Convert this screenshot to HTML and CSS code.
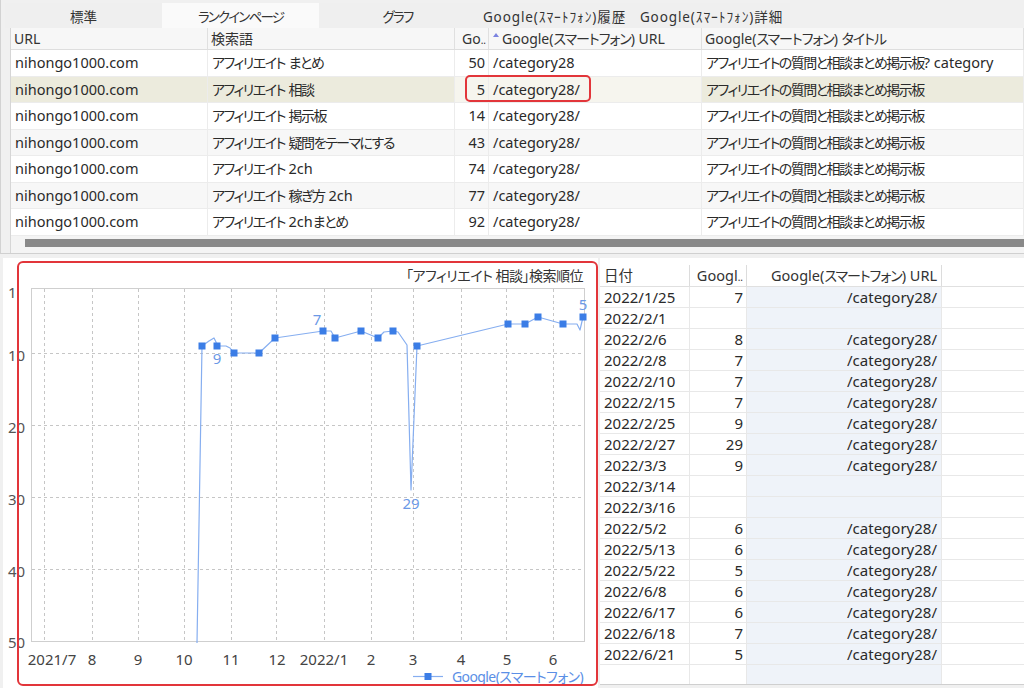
FILE: index.html
```html
<!DOCTYPE html>
<html lang="ja">
<head>
<meta charset="utf-8">
<title>ランクインページ</title>
<link rel="stylesheet" href="styles.css">
</head>
<body>
<div class="app">
  <section class="top">
    <nav class="tabs">
      <div class="tab">標準</div>
      <div class="tab active"><span class="ja">ランクインページ</span></div>
      <div class="tab"><span class="ja">グラフ</span></div>
      <div class="tab hw">Google(ｽﾏｰﾄﾌｫﾝ)履歴</div>
      <div class="tab hw">Google(ｽﾏｰﾄﾌｫﾝ)詳細</div>
    </nav>
    <div class="grid-wrap">
      <div class="row head">
        <div class="cell">URL</div>
        <div class="cell">検索語</div>
        <div class="cell num">Go<span class="dots">..</span></div>
        <div class="cell"><span class="sort"></span>Google(<span class="ja">スマートフォン</span>) URL</div>
        <div class="cell">Google(<span class="ja">スマートフォン</span>) <span class="ja">タイトル</span></div>
      </div>
      <div class="row">
        <div class="cell">nihongo1000.com</div>
        <div class="cell"><span class="ja">アフィリエイト</span> <span class="ja">まとめ</span></div>
        <div class="cell num">50</div>
        <div class="cell">/category28</div>
        <div class="cell"><span class="ja">アフィリエイトの質問と相談まとめ掲示板</span>? category</div>
      </div>
      <div class="row selected">
        <div class="cell">nihongo1000.com</div>
        <div class="cell"><span class="ja">アフィリエイト</span> <span class="ja">相談</span></div>
        <div class="cell num focus">5</div>
        <div class="cell focus">/category28/</div>
        <div class="cell"><span class="ja">アフィリエイトの質問と相談まとめ掲示板</span></div>
      </div>
      <div class="row">
        <div class="cell">nihongo1000.com</div>
        <div class="cell"><span class="ja">アフィリエイト</span> <span class="ja">掲示板</span></div>
        <div class="cell num">14</div>
        <div class="cell">/category28/</div>
        <div class="cell"><span class="ja">アフィリエイトの質問と相談まとめ掲示板</span></div>
      </div>
      <div class="row alt">
        <div class="cell">nihongo1000.com</div>
        <div class="cell"><span class="ja">アフィリエイト</span> <span class="ja">疑問をテーマにする</span></div>
        <div class="cell num">43</div>
        <div class="cell">/category28/</div>
        <div class="cell"><span class="ja">アフィリエイトの質問と相談まとめ掲示板</span></div>
      </div>
      <div class="row">
        <div class="cell">nihongo1000.com</div>
        <div class="cell"><span class="ja">アフィリエイト</span> 2ch</div>
        <div class="cell num">74</div>
        <div class="cell">/category28/</div>
        <div class="cell"><span class="ja">アフィリエイトの質問と相談まとめ掲示板</span></div>
      </div>
      <div class="row alt">
        <div class="cell">nihongo1000.com</div>
        <div class="cell"><span class="ja">アフィリエイト</span> <span class="ja">稼ぎ方</span> 2ch</div>
        <div class="cell num">77</div>
        <div class="cell">/category28/</div>
        <div class="cell"><span class="ja">アフィリエイトの質問と相談まとめ掲示板</span></div>
      </div>
      <div class="row">
        <div class="cell">nihongo1000.com</div>
        <div class="cell"><span class="ja">アフィリエイト</span> 2ch<span class="ja">まとめ</span></div>
        <div class="cell num">92</div>
        <div class="cell">/category28/</div>
        <div class="cell"><span class="ja">アフィリエイトの質問と相談まとめ掲示板</span></div>
      </div>
      <div class="hscroll"><div class="thumb"></div></div>
      <div class="mark cell-mark"></div>
    </div>
  </section>

  <section class="bottom">
    <div class="chart">
      <svg class="plot" width="595" height="430" viewBox="0 0 595 430">
        <g transform="translate(-3,-258)">
          <text class="title" x="583" y="281" text-anchor="end">「アフィリエイト 相談」検索順位</text>
          <rect x="31.5" y="288.5" width="553" height="353" fill="#fff" stroke="#cfcfcf"/>
          <g class="grid" stroke="#c6c6c6" stroke-dasharray="3 3" stroke-width="1">
            <line x1="44.5" y1="289" x2="44.5" y2="641"/>
            <line x1="92.5" y1="289" x2="92.5" y2="641"/>
            <line x1="138.5" y1="289" x2="138.5" y2="641"/>
            <line x1="184.5" y1="289" x2="184.5" y2="641"/>
            <line x1="231.5" y1="289" x2="231.5" y2="641"/>
            <line x1="276.5" y1="289" x2="276.5" y2="641"/>
            <line x1="324.5" y1="289" x2="324.5" y2="641"/>
            <line x1="371.5" y1="289" x2="371.5" y2="641"/>
            <line x1="413.5" y1="289" x2="413.5" y2="641"/>
            <line x1="461.5" y1="289" x2="461.5" y2="641"/>
            <line x1="506.5" y1="289" x2="506.5" y2="641"/>
            <line x1="553.5" y1="289" x2="553.5" y2="641"/>
            <line x1="32" y1="353.5" x2="584" y2="353.5"/>
            <line x1="32" y1="425.5" x2="584" y2="425.5"/>
            <line x1="32" y1="497.5" x2="584" y2="497.5"/>
            <line x1="32" y1="569.5" x2="584" y2="569.5"/>
          </g>
          <g class="ylab">
            <text x="8" y="298">1</text>
            <text x="8" y="361">10</text>
            <text x="8" y="433">20</text>
            <text x="8" y="505">30</text>
            <text x="8" y="577">40</text>
            <text x="8" y="648">50</text>
          </g>
          <g class="xlab" text-anchor="middle">
            <text x="52" y="665">2021/7</text>
            <text x="92" y="665">8</text>
            <text x="138" y="665">9</text>
            <text x="184" y="665">10</text>
            <text x="231" y="665">11</text>
            <text x="277" y="665">12</text>
            <text x="324" y="665">2022/1</text>
            <text x="371" y="665">2</text>
            <text x="413" y="665">3</text>
            <text x="461" y="665">4</text>
            <text x="507" y="665">5</text>
            <text x="553" y="665">6</text>
          </g>
          <polyline class="series" fill="none" stroke="#86aef0" stroke-width="1.2" stroke-linejoin="round"
            points="197,643 202,346 209,341 214,338 216,342 217,346 226,346 230,348 234,353 259,353 275,338 323,331 331,331 335,338 361,331 378,338 384,332 393,331 398,332 407,345 411,490 417,346 508,324 525,324 538,317 563,324 577,324 580,330 583,317"/>
          <g class="marks" fill="#3b7de6">
            <rect x="198.5" y="342.5" width="7" height="7"/>
            <rect x="213.5" y="342.5" width="7" height="7"/>
            <rect x="230.5" y="349.5" width="7" height="7"/>
            <rect x="255.5" y="349.5" width="7" height="7"/>
            <rect x="271.5" y="334.5" width="7" height="7"/>
            <rect x="319.5" y="327.5" width="7" height="7"/>
            <rect x="331.5" y="334.5" width="7" height="7"/>
            <rect x="357.5" y="327.5" width="7" height="7"/>
            <rect x="374.5" y="334.5" width="7" height="7"/>
            <rect x="389.5" y="327.5" width="7" height="7"/>
            <rect x="413.5" y="342.5" width="7" height="7"/>
            <rect x="504.5" y="320.5" width="7" height="7"/>
            <rect x="521.5" y="320.5" width="7" height="7"/>
            <rect x="534.5" y="313.5" width="7" height="7"/>
            <rect x="559.5" y="320.5" width="7" height="7"/>
            <rect x="579.5" y="313.5" width="7" height="7"/>
          </g>
          <g class="vlab" text-anchor="middle">
            <text x="217" y="364">9</text>
            <text x="317" y="325">7</text>
            <text x="411" y="509">29</text>
            <text x="583" y="310">5</text>
          </g>
          <g class="legend">
            <line x1="413" y1="676.5" x2="443" y2="676.5" stroke="#86aef0" stroke-width="1.2"/>
            <rect x="424.5" y="673" width="7" height="7" fill="#3b7de6"/>
            <text x="583" y="682" text-anchor="end">Google(スマートフォン)</text>
          </g>
        </g>
      </svg>
      <div class="mark chart-mark"></div>
    </div>

    <div class="detail">
      <div class="drow dhead">
        <div class="dc">日付</div>
        <div class="dc num">Googl<span class="dots">..</span></div>
        <div class="dc url">Google(<span class="ja">スマートフォン</span>) URL</div>
        <div class="dc rest"></div>
      </div>
      <div class="drow"><div class="dc">2022/1/25</div><div class="dc num">7</div><div class="dc url">/category28/</div><div class="dc rest"></div></div>
      <div class="drow"><div class="dc">2022/2/1</div><div class="dc num"></div><div class="dc url"></div><div class="dc rest"></div></div>
      <div class="drow"><div class="dc">2022/2/6</div><div class="dc num">8</div><div class="dc url">/category28/</div><div class="dc rest"></div></div>
      <div class="drow"><div class="dc">2022/2/8</div><div class="dc num">7</div><div class="dc url">/category28/</div><div class="dc rest"></div></div>
      <div class="drow"><div class="dc">2022/2/10</div><div class="dc num">7</div><div class="dc url">/category28/</div><div class="dc rest"></div></div>
      <div class="drow"><div class="dc">2022/2/15</div><div class="dc num">7</div><div class="dc url">/category28/</div><div class="dc rest"></div></div>
      <div class="drow"><div class="dc">2022/2/25</div><div class="dc num">9</div><div class="dc url">/category28/</div><div class="dc rest"></div></div>
      <div class="drow"><div class="dc">2022/2/27</div><div class="dc num">29</div><div class="dc url">/category28/</div><div class="dc rest"></div></div>
      <div class="drow"><div class="dc">2022/3/3</div><div class="dc num">9</div><div class="dc url">/category28/</div><div class="dc rest"></div></div>
      <div class="drow"><div class="dc">2022/3/14</div><div class="dc num"></div><div class="dc url"></div><div class="dc rest"></div></div>
      <div class="drow"><div class="dc">2022/3/16</div><div class="dc num"></div><div class="dc url"></div><div class="dc rest"></div></div>
      <div class="drow"><div class="dc">2022/5/2</div><div class="dc num">6</div><div class="dc url">/category28/</div><div class="dc rest"></div></div>
      <div class="drow"><div class="dc">2022/5/13</div><div class="dc num">6</div><div class="dc url">/category28/</div><div class="dc rest"></div></div>
      <div class="drow"><div class="dc">2022/5/22</div><div class="dc num">5</div><div class="dc url">/category28/</div><div class="dc rest"></div></div>
      <div class="drow"><div class="dc">2022/6/8</div><div class="dc num">6</div><div class="dc url">/category28/</div><div class="dc rest"></div></div>
      <div class="drow"><div class="dc">2022/6/17</div><div class="dc num">6</div><div class="dc url">/category28/</div><div class="dc rest"></div></div>
      <div class="drow"><div class="dc">2022/6/18</div><div class="dc num">7</div><div class="dc url">/category28/</div><div class="dc rest"></div></div>
      <div class="drow"><div class="dc">2022/6/21</div><div class="dc num">5</div><div class="dc url">/category28/</div><div class="dc rest"></div></div>
      <div class="drow"><div class="dc"></div><div class="dc num"></div><div class="dc url"></div><div class="dc rest"></div></div>
    </div>
  </section>
</div>
</body>
</html>
```

FILE: styles.css
```css
* { box-sizing: border-box; margin: 0; padding: 0; }

html, body {
  width: 1024px;
  height: 688px;
  overflow: hidden;
}

body {
  background: #f0f0f0;
  font-family: "Noto Sans", "Noto Sans CJK JP", sans-serif;
  font-size: 14.5px;
  color: #2a2a2a;
  font-feature-settings: "palt";
}

/* Japanese runs: narrower kana like the Windows UI font */
.ja {
  font-size: 14px;
  letter-spacing: -1.5px;
}

.app {
  display: flex;
  flex-direction: column;
  height: 688px;
}

/* ---------- top panel ---------- */
.top {
  height: 254px;
  display: flex;
  flex-direction: column;
  border-left: 1px solid #d2d2d2;
  border-bottom: 1px solid #d0d0d0;
}

.tabs {
  display: flex;
  height: 28px;
  padding-top: 3px;
  margin-left: 4px;
}

.tab {
  width: 157px;
  display: flex;
  align-items: center;
  justify-content: center;
  font-size: 13.5px;
  color: #333;
  background: #efefef;
}

.tab .ja {
  font-size: 13.5px;
  letter-spacing: -1.8px;
}

.tab.hw {
  letter-spacing: 0.9px;
}

.tab.active {
  background: #fafafa;
}

.grid-wrap {
  position: relative;
  flex: 1;
  margin-left: 9px;
  background: #fff;
  border-left: 1px solid #d6d6d6;
  display: flex;
  flex-direction: column;
}

.row {
  display: grid;
  grid-template-columns: 197px 247px 34px 213px 1fr;
  height: 26.5px;
  border-bottom: 1px solid #ececec;
}

.row.head {
  height: 22px;
  background: #f7f7f7;
  border-bottom: 1px solid #dedede;
}

.row.alt { background: #f7f7f7; }
.row.selected { background: #ecebdd; }
.row.selected .focus { background: #f6f5ee; }

.cell {
  display: block;
  line-height: 25.5px;
  padding: 0 4px;
  white-space: nowrap;
  overflow: hidden;
  border-right: 1px solid #ececec;
}

.head .cell {
  line-height: 21px;
  padding: 0 3px;
  color: #333;
  font-size: 14px;
  border-right: 1px solid #e0e0e0;
}

.head .ja,
.dhead .ja {
  letter-spacing: -1px;
}

.cell.num {
  text-align: right;
  padding: 0 3px 0 0;
}

.head .cell.num { padding-right: 2px; }

.dots {
  font-size: 10px;
}

.sort {
  display: inline-block;
  width: 0;
  height: 0;
  border-left: 3px solid transparent;
  border-right: 3px solid transparent;
  border-bottom: 4px solid #7b83e0;
  margin: 0 3px 0 1px;
  vertical-align: 7px;
}

.hscroll {
  flex: 1;
  background: #f4f4f4;
  padding-top: 3px;
  padding-left: 14px;
}

.thumb {
  height: 8px;
  background: #898989;
}

.mark {
  position: absolute;
  border: 2px solid #e2353a;
  border-radius: 5px;
  pointer-events: none;
}

.cell-mark {
  left: 454px;
  top: 47px;
  width: 126px;
  height: 27px;
}

/* ---------- bottom ---------- */
.bottom {
  display: flex;
  height: 430px;
  margin-top: 4px;
  padding-left: 3px;
  gap: 2px;
}

.chart {
  position: relative;
  width: 595px;
  height: 430px;
  background: #fff;
}

.plot {
  display: block;
  font-family: "Noto Sans", "Noto Sans CJK JP", sans-serif;
}

.title { font-size: 14px; fill: #333; letter-spacing: -0.5px; }
.ylab text { font-size: 15px; fill: #555; }
.xlab text { font-size: 15px; fill: #444; }
.vlab text { font-size: 15px; fill: #6b99e6; }
.legend text { font-size: 14px; fill: #5b8fe6; letter-spacing: -0.6px; }

.chart-mark {
  left: 14px;
  top: 3px;
  width: 581px;
  height: 425px;
  border-radius: 6px;
}

.detail {
  flex: 1;
  background: #fff;
  padding-top: 7px;
  border-bottom: 1px solid #cfcfcf;
  height: 427px;
  overflow: hidden;
  font-size: 15px;
}

.drow {
  display: grid;
  grid-template-columns: 90px 57px 195px 1fr;
  height: 21px;
  border-bottom: 1px solid #e8e8e8;
}

.dhead {
  height: 22px;
  border-bottom: 1px solid #e0e0e0;
}

.dc {
  display: block;
  line-height: 20px;
  padding: 0 4px;
  white-space: nowrap;
  overflow: hidden;
  border-right: 1px solid #e8e8e8;
}

.dc.num { text-align: right; padding-right: 3px; }
.dc.url { text-align: right; padding-right: 4px; background: #eff3f9; }
.dc.rest { border-right: none; }

.dhead .dc { line-height: 21px; color: #333; font-size: 14.5px; border-right-color: #dcdcdc; }
.dhead .dc.url { background: transparent; }
.dhead .dc.rest { border-right: none; }
```
